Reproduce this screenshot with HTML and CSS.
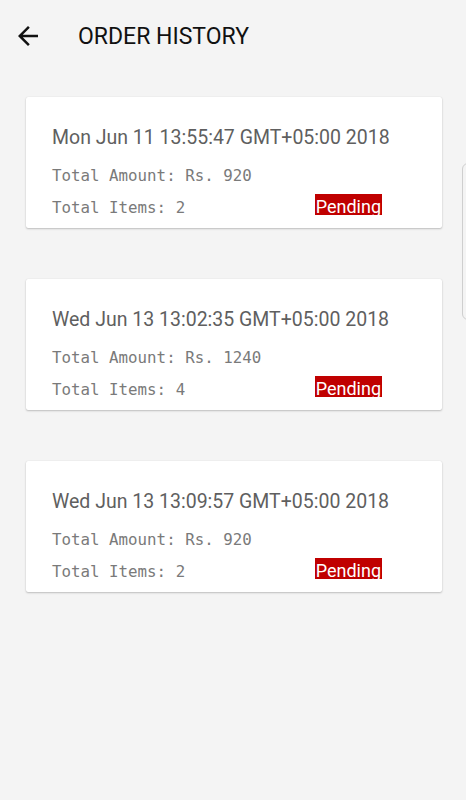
FILE: index.html
```html
<!DOCTYPE html>
<html>
<head>
<meta charset="utf-8">
<link rel="stylesheet" href="styles.css">
</head>
<body>
<div class="app">
  <header class="toolbar">
    <svg class="back" width="20" height="20" viewBox="4 4 16 16"><path d="M20 11H7.83l5.59-5.59L12 4l-8 8 8 8 1.41-1.41L7.83 13H20v-2z" fill="#111"/></svg>
    <h1 class="title">ORDER HISTORY</h1>
  </header>
  <main class="list">
    <div class="card">
      <div class="date">Mon Jun 11 13:55:47 GMT+05:00 2018</div>
      <div class="mono">Total Amount: Rs. 920</div>
      <div class="row"><span class="mono">Total Items: 2</span><span class="badge">Pending</span></div>
    </div>
    <div class="card">
      <div class="date">Wed Jun 13 13:02:35 GMT+05:00 2018</div>
      <div class="mono">Total Amount: Rs. 1240</div>
      <div class="row"><span class="mono">Total Items: 4</span><span class="badge">Pending</span></div>
    </div>
    <div class="card">
      <div class="date">Wed Jun 13 13:09:57 GMT+05:00 2018</div>
      <div class="mono">Total Amount: Rs. 920</div>
      <div class="row"><span class="mono">Total Items: 2</span><span class="badge">Pending</span></div>
    </div>
  </main>
  <div class="edge-handle"></div>
</div>
</body>
</html>
```
FILE: styles.css
```css
html, body {
  margin: 0;
  padding: 0;
  background: #f4f4f4;
}
.app {
  position: relative;
  width: 466px;
  height: 800px;
  overflow: hidden;
  font-family: Roboto, "Noto Sans", sans-serif;
}
.toolbar {
  display: flex;
  align-items: center;
  height: 72px;
  padding-left: 18px;
}
.back {
  display: block;
}
.title {
  margin: 0 0 0 40px;
  font-weight: 400;
  font-size: 23px;
  color: #111;
}
.list {
  display: flex;
  flex-direction: column;
  gap: 51px;
  padding: 25px 24px 0 26px;
}
.card {
  background: #fff;
  height: 131px;
  box-sizing: border-box;
  border-radius: 2px;
  box-shadow: 0 1px 2px rgba(0,0,0,0.22), 0 0 1px rgba(0,0,0,0.12);
  padding: 28px 10px 0 26px;
}
.date {
  font-size: 19.5px;
  line-height: 26px;
  color: #5f5f5f;
  white-space: nowrap;
}
.mono {
  font-family: "DejaVu Sans Mono", "Liberation Mono", monospace;
  font-size: 15.8px;
  line-height: 32px;
  color: #7a7a7a;
  margin-top: 8.5px;
}
.row {
  display: flex;
  justify-content: space-between;
  align-items: center;
  margin-right: 50px;
}
.row .mono {
  margin-top: 0;
}
.badge {
  display: block;
  box-sizing: border-box;
  height: 21px;
  overflow: hidden;
  background: #c00000;
  color: #fff;
  font-size: 18px;
  line-height: 18px;
  padding: 4px 1px 0;
  margin-bottom: 6px;
}
.edge-handle {
  position: absolute;
  left: 462px;
  top: 163px;
  width: 10px;
  height: 155px;
  border: 1px solid #cfcfcf;
  border-radius: 6px;
  background: #f4f4f4;
}
```
